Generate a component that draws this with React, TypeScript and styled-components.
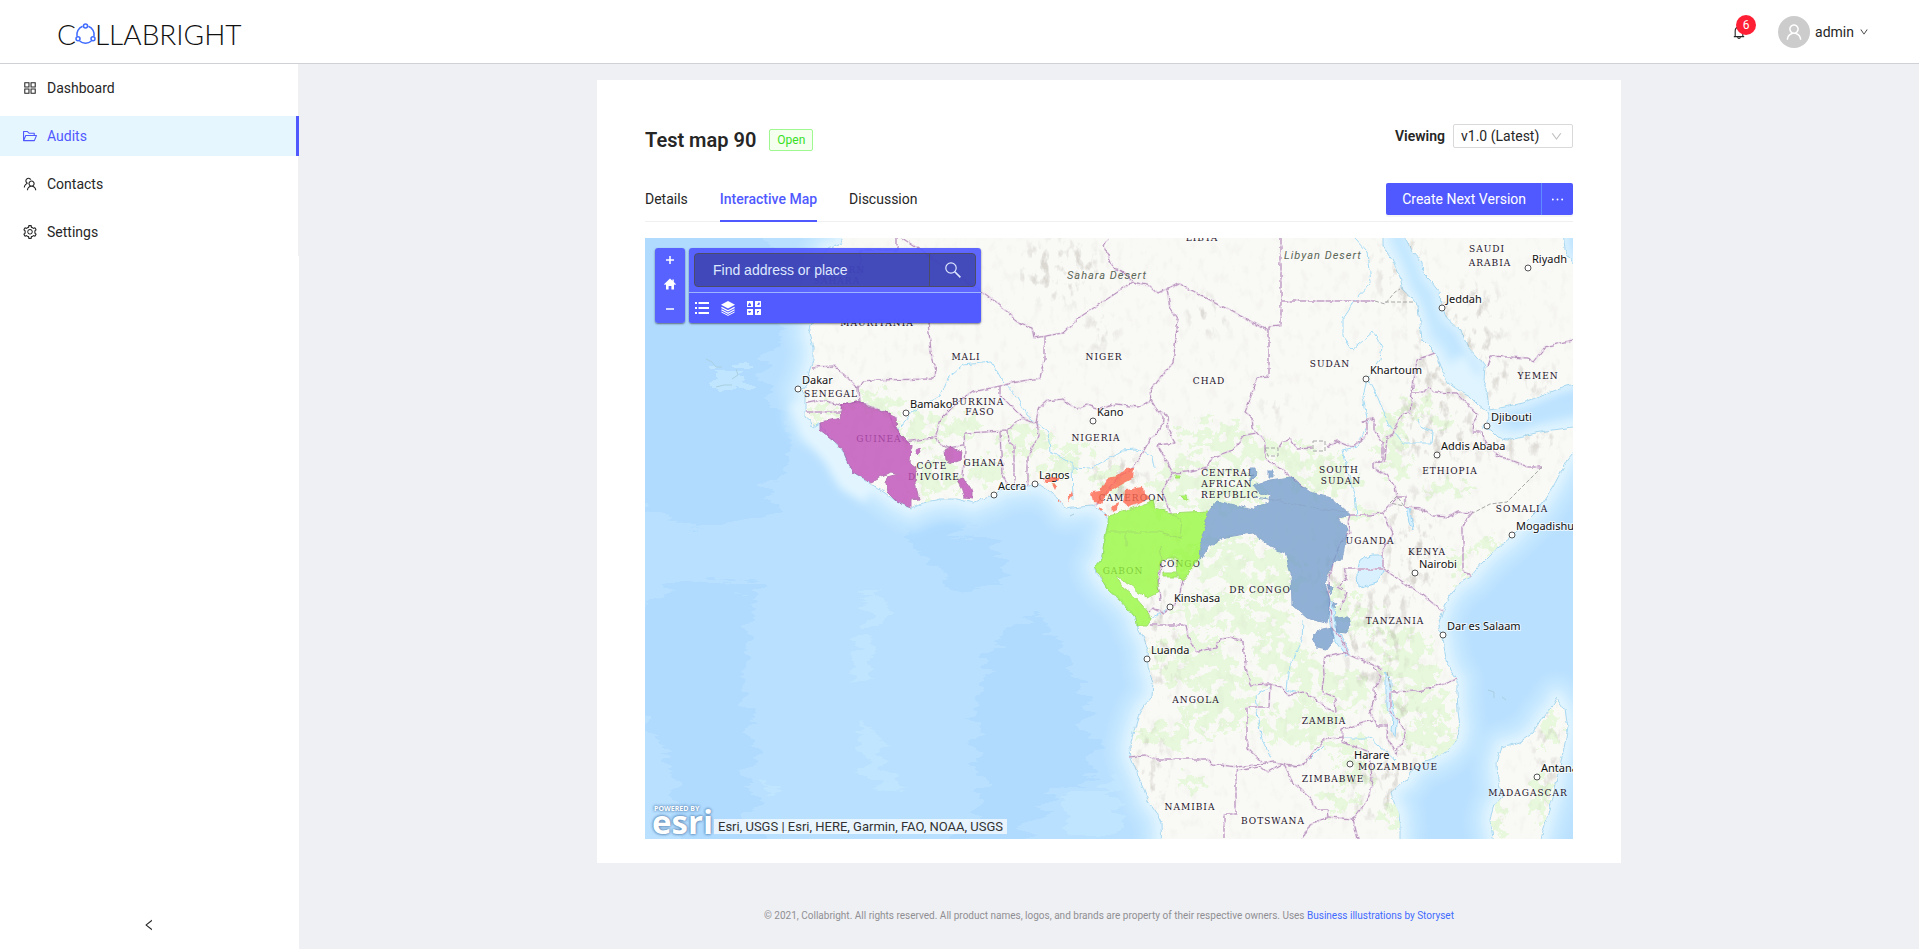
import React from 'react';
import styled, { createGlobalStyle, css } from 'styled-components';
import {
  AiOutlineAppstore,
  AiOutlineBell,
  AiOutlineDown,
  AiOutlineEllipsis,
  AiOutlineFolderOpen,
  AiOutlineLeft,
  AiOutlineSetting,
  AiOutlineTeam,
  AiOutlineUser,
} from 'react-icons/ai';

const color = {
  primary: '#5059ff',
  text: '#262626',
  page: '#eff0f4',
  line: '#f0f0f0',
};

const GlobalStyle = createGlobalStyle`
  *, *::before, *::after { box-sizing: border-box; }
  body {
    margin: 0;
    background: ${color.page};
    color: ${color.text};
    font: 14px/22px Roboto, "Liberation Sans", sans-serif;
  }
  button, input, select { font: inherit; color: inherit; margin: 0; }
  button { cursor: pointer; }
  a { text-decoration: none; }
`;

/* ---------- page frame ---------- */

const Page = styled.div`
  min-height: 100vh;
  display: flex;
  flex-direction: column;
`;

const Header = styled.header`
  height: 64px;
  flex: none;
  display: flex;
  align-items: center;
  justify-content: space-between;
  padding: 0 50px 0 57px;
  background: #fff;
  border-bottom: 1px solid #d0d1d4;
`;

const Logo = styled.a`
  display: flex;
  align-items: center;
  color: #111;
  font: 300 28px/28px Lato, sans-serif;
  padding-top: 4px;

  svg { display: block; margin: 0 -1px; }
`;

const HeaderActions = styled.div`
  display: flex;
  align-items: center;
  gap: 31px;
`;

const BellButton = styled.button`
  position: relative;
  display: flex;
  padding: 0;
  border: 0;
  background: none;
  font-size: 16px;
`;

const Badge = styled.span`
  position: absolute;
  left: 5px;
  top: -9px;
  width: 20px;
  height: 20px;
  border-radius: 10px;
  background: #ff1f35;
  color: #fff;
  font-size: 12px;
  line-height: 20px;
  text-align: center;
`;

const UserButton = styled.button`
  display: flex;
  align-items: center;
  gap: 5px;
  padding: 0;
  border: 0;
  background: none;

  > svg { font-size: 10px; }
`;

const Avatar = styled.span`
  display: grid;
  place-items: center;
  width: 32px;
  height: 32px;
  border-radius: 50%;
  background: #ccc;
  color: #fff;
  font-size: 20px;
`;

const Body = styled.div`
  flex: 1;
  display: flex;
`;

const Sidebar = styled.aside`
  flex: none;
  width: 299px;
  display: flex;
  flex-direction: column;
  justify-content: space-between;
  background: #fff;
`;

const Menu = styled.nav`
  display: flex;
  flex-direction: column;
  gap: 8px;
  padding: 4px 0;
  border-right: 1px solid ${color.line};
`;

const MenuItem = styled.a<{ $active?: boolean }>`
  display: flex;
  align-items: center;
  gap: 9px;
  height: 40px;
  padding-left: 22px;
  color: ${color.text};

  svg { font-size: 16px; }

  ${(p) =>
    p.$active &&
    css`
      margin-right: -1px;
      background: #e6f6ff;
      border-right: 3px solid ${color.primary};
      color: ${color.primary};
    `}
`;

const Collapse = styled.button`
  display: grid;
  place-items: center;
  height: 48px;
  padding: 0 2px 0 0;
  border: 0;
  background: #fff;
`;

const Main = styled.main`
  flex: 1;
  min-width: 0;
  display: flex;
  flex-direction: column;
  align-items: center;
  padding: 16px 24px 21px;
`;

/* ---------- card ---------- */

const Card = styled.section`
  width: 100%;
  max-width: 1024px;
  padding: 44px 48px 24px;
  background: #fff;
`;

const TitleRow = styled.div`
  display: flex;
  justify-content: space-between;
  align-items: flex-start;
  margin-bottom: 20px;
`;

const TitleGroup = styled.div`
  display: flex;
  align-items: center;
  gap: 13px;
`;

const Title = styled.h1`
  margin: 0;
  font-size: 20px;
  font-weight: 600;
  line-height: 32px;
`;

const Tag = styled.span`
  padding: 0 7px;
  border: 1px solid #a0f890;
  border-radius: 2px;
  background: #f4fff0;
  color: #36e01e;
  font-size: 12px;
  line-height: 20px;
`;

const VersionPicker = styled.label`
  display: flex;
  align-items: center;
  gap: 8px;
  font-weight: 600;
`;

const SelectBox = styled.span`
  position: relative;
  display: flex;
  font-weight: 400;

  select {
    appearance: none;
    width: 120px;
    height: 24px;
    padding: 0 7px;
    border: 1px solid #d9d9d9;
    border-radius: 2px;
    background: #fff;
  }

  svg {
    position: absolute;
    right: 10px;
    top: 6px;
    font-size: 13px;
    color: #bfbfbf;
    pointer-events: none;
  }
`;

const TabBar = styled.div`
  display: flex;
  justify-content: space-between;
  align-items: center;
  height: 46px;
  margin-bottom: 16px;
  box-shadow: inset 0 -1px ${color.line};
`;

const Tabs = styled.div`
  display: flex;
  gap: 32px;
`;

const Tab = styled.button<{ $active?: boolean }>`
  height: 46px;
  padding: 2px 0 0;
  border: 0;
  border-bottom: 2px solid ${(p) => (p.$active ? color.primary : 'transparent')};
  background: none;
  color: ${(p) => (p.$active ? color.primary : color.text)};
  font-weight: ${(p) => (p.$active ? 500 : 400)};
`;

const ButtonGroup = styled.div`
  display: flex;
`;

const PrimaryButton = styled.button<{ $side: 'left' | 'right' }>`
  display: flex;
  align-items: center;
  height: 32px;
  border: 0;
  background: ${color.primary};
  color: #fff;
  box-shadow: 0 2px 0 rgba(0, 0, 0, 0.04);
  ${(p) =>
    p.$side === 'left'
      ? css`
          padding: 0 15px 0 16px;
          border-right: 1px solid #5f8dff;
          border-radius: 2px 0 0 2px;
        `
      : css`
          padding: 0 7px;
          border-radius: 0 2px 2px 0;
          font-size: 17px;
        `}
`;

/* ---------- map ---------- */

const MapFrame = styled.div`
  position: relative;
  height: 601px;
  overflow: hidden;
  background: #b7dfff;

  > svg { display: block; width: 100%; height: 100%; }
`;

const MapControls = styled.div`
  position: absolute;
  left: 10px;
  top: 10px;
  display: flex;
  gap: 4px;
  color: #fff;
`;

const panel = css`
  background: rgba(80, 89, 255, 0.92);
  border-radius: 3px;
  box-shadow: 0 1px 2px rgba(0, 0, 0, 0.5);
`;

const ZoomPanel = styled.div`
  ${panel}
  display: flex;
  flex-direction: column;
  width: 30px;
  height: 75px;
  padding-bottom: 2px;
`;

const MapButton = styled.button`
  flex: 1;
  display: grid;
  place-items: center;
  padding: 0;
  border: 0;
  background: none;
`;

const SearchPanel = styled.div`
  ${panel}
  width: 292px;
`;

const SearchRow = styled.form`
  padding: 5px;
  height: 45px;
  border-bottom: 1px solid #9db4ff;
`;

const SearchField = styled.div`
  display: flex;
  height: 34px;
  border: 1px solid #4c4c66;
  border-radius: 4px;
  background: rgba(50, 55, 140, 0.6);

  input {
    flex: 1;
    min-width: 0;
    padding: 0 18px;
    border: 0;
    outline: 0;
    background: none;
    font: 14px/32px "Liberation Sans", sans-serif;
  }
  input::placeholder { color: #dfe8ff; opacity: 1; }
  button {
    width: 46px;
    display: grid;
    place-items: center;
    padding: 0;
    border: 0;
    border-left: 1px solid #4c4c66;
    background: none;
  }
`;

const ToolRow = styled.div`
  display: flex;
  align-items: center;
  gap: 10px;
  height: 30px;
  padding: 0 5px;
  border-radius: 0 0 3px 3px;
  background: rgba(80, 89, 255, 0.85);

  button { flex: none; width: 16px; height: 16px; }
`;

const Attribution = styled.div`
  position: absolute;
  left: 6px;
  bottom: 2px;
  display: flex;
  align-items: flex-end;
  gap: 3px;
`;

const EsriLogo = styled.a`
  width: 60px;
  display: flex;
  flex-direction: column;
  color: #fff;
  text-shadow: 0 0 3px #5a86b4, 0 0 3px #5a86b4;

  svg { display: block; overflow: visible; }
`;

const Credits = styled.span`
  margin-bottom: 3px;
  padding: 0 4px;
  background: rgba(255, 255, 255, 0.7);
  color: #323232;
  font-size: 13px;
  line-height: 15px;
`;

const Footer = styled.footer`
  margin-top: auto;
  color: #8f8f93;
  font-size: 10px;
  line-height: 24px;
  text-align: center;

  a { color: #3f6bff; }
`;

/* ---------- map artwork ---------- */

const AFRICA =
  'M843 238 840 245 827 249 820 262 822 280 815 300 812 323 809 333 813 347 813 360 810 368 808 377 806 385 802 390 806 395 806 417 810 420 813 427 820 422 822 428 827 433 833 440 842 450 847 460 853 472 868 482 885 493 897 502 911 509 923 503 940 499 957 499 973 503 982 499 993 496 1000 490 1013 487 1028 486 1040 485 1048 490 1057 497 1062 503 1066 509 1080 507 1092 506 1099 510 1105 514 1109 522 1107 533 1104 542 1103 552 1100 562 1095 566 1098 575 1107 587 1120 598 1132 612 1135 618 1137 627 1143 638 1147 650 1148 667 1153 682 1152 697 1143 707 1138 717 1133 733 1130 747 1131 758 1137 773 1143 787 1148 800 1157 813 1161 822 1162 860 1400 860 1400 827 1399 813 1393 800 1391 792 1397 787 1407 780 1413 770 1423 762 1437 757 1448 750 1457 740 1460 728 1458 710 1457 693 1457 680 1450 670 1446 657 1444 647 1443 637 1438 627 1442 613 1445 603 1452 592 1460 583 1470 577 1482 563 1493 552 1510 538 1523 525 1538 510 1553 487 1567 460 1600 420 1573 427 1560 429 1540 432 1523 436 1507 440 1497 437 1490 430 1482 428 1488 417 1487 412 1478 405 1470 397 1458 390 1448 383 1443 372 1437 355 1422 340 1420 323 1418 307 1412 298 1403 290 1400 277 1392 260 1383 245 1383 220 843 220Z';
const ARABIA =
  'M1405 220 1405 238 1413 252 1422 262 1423 273 1432 282 1440 292 1441 305 1447 318 1460 330 1467 345 1478 357 1485 367 1484 380 1487 393 1489 410 1500 408 1523 403 1540 396 1560 388 1590 380 1590 270 1573 263 1565 250 1562 220Z';
const MADAGASCAR =
  'M1557 698 1565 710 1568 727 1565 743 1562 757 1558 773 1553 797 1547 817 1538 850 1495 850 1490 820 1493 807 1502 797 1498 780 1497 763 1502 747 1520 742 1533 733 1543 717 1552 707Z';

const BORDERS = [
  'M897 238V250H860V275 M902 238 917 248 981 292 1009 312 1012 317 1020 323 1032 327 1034 338 1063 333 1080 317 1133 282 1122 271 1113 268 1108 255 1103 247 1108 238',
  'M1133 282 1150 286 1158 293 1178 283 1269 331V326L1281 325V238 M1281 301H1375',
  'M1269 331V377L1257 378 1253 390 1250 400 1245 412 1252 417 1253 428 1257 433 1265 443 1265 458 1273 463 1290 477 1305 488',
  'M1278 448 1282 442 1290 439 1297 449 1313 448 M1326 447 1337 441 1352 447 1367 435 1367 423 1363 422 1374 418 1374 430 1383 443 1383 460',
  'M1435 353 1417 360 1415 373 1412 393 1410 412 1403 413 1395 427 1393 434 1387 437 1385 460 1373 463 1373 468 1387 475 1395 487 1397 497 1405 497 1405 507 1422 508 1433 516 1448 517 1458 512 1473 513 1463 525 1463 568 1470 577',
  'M1412 393 1423 393 1428 387 1433 392 1457 393 1478 415 1473 423 1472 432 1482 432 1485 443 1497 455 1528 467 1542 467',
  'M1350 515 1370 515 1383 513 1390 505 1397 498 M1383 512 1393 533 1383 550 1383 569H1343L1347 580 1337 587 1346 592 1340 610 M1383 569 1423 595 1442 611',
  'M1350 515 1348 523 1350 533 1340 543 1333 563 1330 577 1328 590 1330 607 1332 627 1340 638 1350 655 1373 665 1383 670',
  'M1373 667 1380 677 1374 690 1375 700 1370 713 1377 725 1388 725 1387 737 1397 755 1398 747 1405 740 1403 727 1390 710 1390 692 1417 691 1433 688 1457 679',
  'M1372 720 1342 730V742L1370 752 1372 780 1370 797 1353 819 1358 839 M1342 737 1323 740 1303 765 1290 766 1283 763 1293 783 1310 797 1317 810 1327 810 1328 817 1353 819 M1328 817 1310 825 1303 839',
  'M1150 625H1186L1188 637 1197 651 1217 648 1219 638 1230 637 1243 641 1245 663 1250 685 1270 684 1283 688 1290 695 1303 692 1320 702 1328 710 1336 712 1335 698 1322 693 1324 675 1323 658 1347 652',
  'M1270 684 1269 707H1247V748L1262 762 M1130 757 1145 755 1157 759H1207L1212 764 1237 767 1275 762 1297 766 M1260 767 1236 771V814H1224V839 M1260 766 1267 772 1283 763',
  'M1183 580 1180 593 1172 607 1163 613 1153 608 1148 613 M1162 560 1158 583 1160 600',
  'M1151 400 1157 410 1163 417 1162 428 1150 440 1143 452 1133 468 1120 476 1108 490 1095 506 M1167 289 1170 308 1178 320 1173 363 1157 382 1150 393 1151 400',
  'M1157 410 1167 415 1168 430 1175 443 1157 445 1173 473 1162 490 1170 513 M1173 473 1187 472 1207 467 1213 457 1233 450 1245 435 1257 433',
  'M1037 423 1040 407 1047 401 1063 399 1077 409 1087 405 1100 409 1117 404 1137 407 1151 400 M1037 423 1039 435 1028 457V485 M1007 431 1008 440 1014 445V487',
  'M964 433 1007 431 1022 417 M964 433 965 450 963 477 M1000 432 1002 473 1008 485 M1044 337V360L1040 378 1012 383 1000 386 973 392 957 403 940 420 935 438',
  'M1000 386V395L1008 403 1022 417 1037 423 M928 323 932 360 936 370 934 379 873 380 862 381 858 388 835 366 812 367 M858 388 859 403 M807 403 822 400 840 405 M807 412 840 412 842 405',
  'M897 430 905 442 933 438 947 448 963 446 M842 405 858 402 888 413 897 430 M1487 367 1490 356 1527 358 1533 362 1545 347 1573 340',
];

const DISPUTED = [
  'M1375 301 1385 304 1395 292 1400 289 M1385 302H1415',
  'M1542 467 1507 502 1490 504 1473 513',
  'M1313 441h12v10h-12z M1265 448h13v8h-10z M1390 503 1397 496 1404 506z M1387 672 1391 690',
];

const RIVERS = [
  'M1355 238 1368 252 1371 283 1355 300 1343 318 1343 337 1352 349 1373 332 1382 347 1380 360 1367 378 1363 397 1368 423 1357 447 1342 450 1347 470 1355 493 1357 517',
  'M1367 378 1378 397 1388 423 1403 443 1432 443 1433 432 1422 428 1419 420',
  'M940 395 948 377 963 365 992 362 1003 382 1017 397 1027 415 1048 432 1050 452 1072 463 1073 500 M1073 468 1090 469 1123 450 1135 449 1153 457 1155 468',
  'M898 430 912 412 942 395 M1303 620 1302 640 1290 665 1287 690 1297 693 M1270 687 1255 695 1258 720 1262 740 1272 759 M1303 765 1323 745 M1342 738H1370L1395 760 M1150 620 1170 607',
];

/* [x, y, rx, ry] of the wooded areas */
const WOODS: number[][] = [
  [880, 402, 26, 12], [920, 430, 26, 14], [960, 425, 20, 12], [1025, 440, 24, 16], [935, 475, 24, 20],
  [825, 412, 20, 7], [988, 470, 20, 14], [1060, 468, 22, 12], [1075, 448, 26, 6], [1110, 480, 22, 12],
  [1215, 435, 40, 12], [1245, 450, 34, 14], [1190, 480, 34, 24], [1290, 455, 24, 14], [1225, 490, 40, 20],
  [1320, 475, 36, 20], [1165, 500, 20, 10], [1225, 560, 50, 20], [1265, 575, 40, 26], [1210, 610, 34, 20],
  [1255, 620, 40, 16], [1190, 660, 40, 26], [1230, 690, 32, 22], [1170, 735, 36, 12], [1215, 715, 34, 16],
  [1280, 655, 26, 22], [1310, 680, 22, 24], [1300, 725, 40, 20], [1345, 745, 24, 10], [1350, 690, 24, 20],
  [1420, 705, 36, 18], [1430, 740, 28, 16], [1410, 672, 30, 16], [1360, 620, 20, 14], [1400, 645, 34, 14],
  [1355, 770, 18, 12], [1395, 815, 18, 10], [1485, 548, 16, 8], [1460, 581, 12, 5], [1415, 405, 18, 8],
  [1400, 470, 12, 14], [1392, 450, 12, 20], [1450, 490, 26, 7], [1395, 428, 14, 14], [1440, 420, 12, 8],
  [1550, 730, 10, 16], [1540, 800, 8, 30], [1500, 815, 8, 20], [1340, 800, 20, 12], [1360, 515, 18, 6],
  [1190, 782, 14, 7], [1460, 560, 10, 8], [1340, 600, 14, 20],
];

/* [x, y, rx, ry] of the mountain ranges that get shaded relief */
const RELIEF: number[][] = [
  [1435, 425, 36, 50], [1410, 550, 26, 60], [1440, 350, 26, 60], [1480, 330, 20, 50], [1208, 315, 18, 16],
  [1510, 380, 50, 14], [1375, 640, 30, 50], [1330, 570, 14, 40], [1400, 730, 20, 40], [1160, 640, 14, 60],
  [1120, 480, 26, 26], [1180, 540, 10, 10], [1548, 740, 10, 70], [1060, 270, 40, 30], [1400, 260, 20, 50],
  [1380, 790, 30, 30], [1150, 770, 14, 40], [1500, 440, 60, 16], [1100, 330, 12, 20], [1275, 405, 8, 12],
];

const COUNTRIES: [string, number, number][] = [
  ['ANGOLA', 1196, 703], ['NAMIBIA', 1190, 810], ['BOTSWANA', 1273, 824], ['ZAMBIA', 1324, 724],
  ['ZIMBABWE', 1333, 782], ['MOZAMBIQUE', 1398, 770], ['MADAGASCAR', 1528, 796], ['TANZANIA', 1395, 624],
  ['KENYA', 1427, 555], ['UGANDA', 1370, 544], ['SOMALIA', 1522, 512], ['DR CONGO', 1260, 593],
  ['CONGO', 1180, 567], ['GABON', 1123, 574], ['CAMEROON', 1132, 501], ['NIGERIA', 1096, 441],
  ['NIGER', 1104, 360], ['CHAD', 1209, 384], ['CENTRAL', 1228, 476], ['AFRICAN', 1227, 487],
  ['REPUBLIC', 1230, 498], ['MALI', 966, 360], ['BURKINA', 978, 405], ['FASO', 980, 415],
  ['GHANA', 984, 466], ['CÔTE', 932, 469], ["D'IVOIRE", 934, 480], ['GUINEA', 879, 442],
  ['SENEGAL', 831, 397], ['MAURITANIA', 877, 326], ['WESTERN', 837, 273], ['SAHARA', 837, 284],
  ['LIBYA', 1202, 241], ['SUDAN', 1330, 367], ['SOUTH', 1339, 473], ['SUDAN', 1341, 484],
  ['ETHIOPIA', 1450, 474], ['YEMEN', 1538, 379], ['SAUDI', 1487, 252], ['ARABIA', 1490, 266],
];

const CITIES: [string, number, number][] = [
  ['Dakar', 798, 389], ['Bamako', 906, 413], ['Kano', 1093, 421], ['Lagos', 1035, 484],
  ['Accra', 994, 495], ['Khartoum', 1366, 379], ['Jeddah', 1442, 308], ['Riyadh', 1528, 268],
  ['Djibouti', 1487, 426], ['Addis Ababa', 1437, 455], ['Mogadishu', 1512, 535], ['Nairobi', 1415, 573],
  ['Dar es Salaam', 1443, 635], ['Harare', 1350, 764], ['Antananarivo', 1537, 777],
  ['Kinshasa', 1170, 607], ['Luanda', 1147, 659],
];

const Country = styled.text`
  font: 10px "DejaVu Serif Condensed", "DejaVu Serif", serif;
  letter-spacing: 1px;
  text-anchor: middle;
  fill: #23122a;
  stroke: rgba(255, 255, 255, 0.3);
  stroke-width: 1px;
  paint-order: stroke;
`;

const City = styled.text`
  font: 11px "Noto Sans", sans-serif;
  fill: #111;
  stroke: rgba(255, 255, 255, 0.7);
  stroke-width: 2px;
  paint-order: stroke;
`;

const Desert = styled.text`
  font: italic 11px Roboto, sans-serif;
  letter-spacing: 1px;
  fill: #5c6657;
`;

const MapArt = () => (
  <svg viewBox="645 238 928 601" preserveAspectRatio="xMidYMid slice" role="img" aria-label="Map of Africa">
    <defs>
      <filter id="rough" x="-5%" y="-5%" width="110%" height="110%">
        <feTurbulence type="fractalNoise" baseFrequency="0.12" numOctaves="3" seed="4" />
        <feDisplacementMap in="SourceGraphic" scale="5" xChannelSelector="R" yChannelSelector="G" />
      </filter>
      <filter id="shelf" x="-5%" y="-5%" width="110%" height="110%">
        <feGaussianBlur in="SourceGraphic" stdDeviation="4" />
      </filter>
      <filter id="bathymetry" x="-5%" y="-5%" width="110%" height="110%">
        <feTurbulence type="fractalNoise" baseFrequency="0.015 0.09" numOctaves="4" seed="9" />
        <feDisplacementMap in="SourceGraphic" scale="46" xChannelSelector="R" yChannelSelector="G" />
      </filter>
      <filter id="foliage" x="-5%" y="-5%" width="110%" height="110%">
        <feTurbulence type="fractalNoise" baseFrequency="0.09" numOctaves="5" seed="12" result="n" />
        <feDisplacementMap in="SourceGraphic" in2="n" scale="36" xChannelSelector="R" yChannelSelector="G" result="d" />
        <feColorMatrix in="n" type="matrix" values="0 0 0 0 0  0 0 0 0 0  0 0 0 0 0  0 0 30 0 -12" result="m" />
        <feComposite in="d" in2="m" operator="in" />
      </filter>
      <filter id="hills" x="0" y="0" width="100%" height="100%">
        <feTurbulence type="fractalNoise" baseFrequency="0.12 0.07" numOctaves="4" seed="21" result="n" />
        <feColorMatrix in="n" type="matrix" values="0 0 0 0 .45  0 0 0 0 .42  0 0 0 0 .36  0 4 0 0 -2.1" result="s" />
        <feGaussianBlur in="SourceAlpha" stdDeviation="8" result="b" />
        <feComposite in="s" in2="b" operator="in" />
      </filter>
      <clipPath id="land">
        <path d={AFRICA} />
        <path d={ARABIA} />
        <path d={MADAGASCAR} />
      </clipPath>
    </defs>

    <rect x="645" y="238" width="928" height="601" fill="#b9e0ff" />
    <g filter="url(#bathymetry)" fill="#b0dbff">
      <path d="M620 210H740L790 300 760 370 790 440 770 510 700 530 620 500Z" />
      <path d="M665 590 760 580 750 660 745 730 760 860 690 860 670 760 630 700 630 620Z" />
      <path d="M920 510 990 535 1010 580 960 585 900 540Z" />
      <path d="M1030 605 1060 640 1085 700 1095 770 1060 790 1000 860 960 860 980 780 975 690 1000 640Z" />
    </g>
    <g filter="url(#bathymetry)" fill="#c0e6ff">
      <path d="M715 365h30v25h-30z M850 640l20-4 6 50-24-4z M862 600l22-6 4 34-20 0z M855 720l24 10 14 60-24-6z M1060 800l60-30v70h-50z M760 780l20 10-12 10z" />
    </g>

    <g fill="none" strokeLinejoin="round" filter="url(#shelf)">
      <g stroke="#c4e7ff" strokeWidth="44"><path d={AFRICA} /><path d={MADAGASCAR} /></g>
      <g stroke="#d3eeff" strokeWidth="22"><path d={AFRICA} /><path d={MADAGASCAR} /><path d={ARABIA} strokeWidth="12" /></g>
      <g stroke="#e4f6ff" strokeWidth="8"><path d={AFRICA} /><path d={MADAGASCAR} /><path d={ARABIA} strokeWidth="4" /></g>
      <path d="M800 400 812 430 835 455 850 480 870 492" stroke="#e2f5ff" strokeWidth="24" />
      <path d="M1394 228 1410 262 1420 290 1434 320 1450 345 1460 365" stroke="#c3e7ff" strokeWidth="12" />
      <path d="M1455 360 1470 385 1482 405" stroke="#dff4ff" strokeWidth="24" />
      <path d="M1580 405 1540 414 1510 424" stroke="#bde3ff" strokeWidth="18" />
    </g>

    <g filter="url(#rough)" fill="#f9f9f6" stroke="#a9d8f0" strokeWidth="1">
      <path d={AFRICA} />
      <path d={ARABIA} />
      <path d={MADAGASCAR} />
    </g>

    <g clipPath="url(#land)">
      <g filter="url(#foliage)" fill="#e7f8dc">
        {WOODS.map(([x, y, rx, ry], i) => <ellipse key={i} cx={x} cy={y} rx={rx} ry={ry} />)}
      </g>
      <g opacity="0.06"><rect x="645" y="238" width="928" height="601" filter="url(#hills)" /></g>
      <g filter="url(#hills)" opacity="0.4">
        {RELIEF.map(([x, y, rx, ry], i) => <ellipse key={i} cx={x} cy={y} rx={rx} ry={ry} />)}
      </g>
    </g>

    <g fill="#d9f1ff" stroke="#9fd6f2" strokeWidth="1" filter="url(#rough)">
      <path d="M1360 560 1372 555 1382 555 1383 572 1377 582 1358 588 1357 573Z" />
      <path d="M1406 508 1409 509 1412 522 1413 530 1410 526Z" />
      <path d="M1328 600 1332 602 1335 625 1343 640 1351 655 1346 655 1332 635 1329 618Z" />
      <path d="M1386 672 1391 680 1391 700 1397 722 1396 738 1392 730 1393 718 1386 708Z" />
    </g>
    <g fill="none" stroke="#a5dcf5" strokeWidth="1" filter="url(#rough)">
      {RIVERS.map((d) => <path key={d} d={d} />)}
    </g>
    <g fill="none" strokeLinejoin="round" filter="url(#rough)">
      {BORDERS.map((d) => <path key={d} d={d} stroke="#e6d6e7" strokeWidth="2" />)}
      {BORDERS.map((d) => <path key={d} d={d} stroke="#b793bb" strokeWidth="1" strokeDasharray="7 2" />)}
    </g>
    <g fill="none" stroke="#a8a8a8" strokeWidth="1" strokeDasharray="4 2">
      {DISPUTED.map((d) => <path key={d} d={d} />)}
    </g>
    <g fill="none" stroke="#a9cfe0" strokeWidth="1">
      <path d="M706 359l6 3 4 5 6 0 M736 369l2 6 -6 4 M716 387l8-2 8 0 M1070 516l4-2 M1488 690l6 2 0 6 M1502 697l4 3" />
    </g>

    <Desert x="1067" y="279">Sahara Desert</Desert>
    <Desert x="1284" y="259">Libyan Desert</Desert>
    {COUNTRIES.map(([name, x, y]) => <Country key={name + y} x={x} y={y}>{name}</Country>)}
    {CITIES.map(([name, x, y]) => (
      <g key={name}>
        <circle cx={x} cy={y} r="3" fill="#fff" stroke="#555" strokeWidth="1" />
        <City x={x + 4} y={y - 5}>{name}</City>
      </g>
    ))}

    <g opacity="0.8" filter="url(#rough)">
      <g fill="#bf4fb9" stroke="#a556a5" strokeWidth="1">
        <path d="M842 405 858 402 868 407 888 413 897 417 898 432 911 445 910 463 916 467 915 483 919 499 911 500 911 508 897 502 887 492 885 483 887 477 898 474 890 472 870 482 853 472 847 460 842 448 832 439 820 430 820 422 840 418Z" />
        <path d="M945 450 952 447 961 452 960 460 952 463 946 460Z M957 480 963 478 972 492 972 499 965 498 962 488Z M916 450 920 448 921 452 918 454Z" />
      </g>
      <g fill="#ff6750">
        <path d="M1091 492 1100 491 1107 478 1117 476 1125 469 1134 468 1133 478 1120 485 1108 493 1102 503 1093 502Z" />
        <path d="M1125 490 1143 487 1144 495 1151 498 1140 502 1128 507 1123 503Z M1112 506 1118 503 1117 509 1113 511Z M1098 507 1103 509 1101 512Z M1044 479 1050 477 1060 479 1058 482 1046 482Z M1053 484 1058 485 1056 490Z M1072 491 1073 495 1068 502 1069 498Z M1104 514 1108 516 1105 517Z M1058 499 1060 502 1058 503Z" />
      </g>
      <g fill="#98f940" stroke="#8ed94a" strokeWidth="1">
        <path d="M1109 515 1130 509 1147 503 1153 500 1155 508 1170 513 1208 511 1207 523 1202 535 1200 557 1187 575 1183 580 1178 579 1177 558 1168 558 1160 563 1157 577 1159 592 1147 598 1130 585 1117 577 1122 587 1135 597 1148 612 1151 620 1147 626 1136 626 1135 617 1120 600 1107 588 1095 566 1102 558 1104 542 1108 523Z" />
        <path d="M1163 572h14v5h-14z M1175 475h5v3h-5z M1179 495l8 0 1 4-5 0z" />
        <path d="M1108 532H1126V546 M1126 532H1160L1180 538 1182 520 1170 513 M1160 545 1162 560" fill="none" />
      </g>
      <g fill="#779fcd" stroke="#7295c4" strokeWidth="1">
        <path d="M1208 512 1217 501 1230 504 1253 510 1257 505 1270 502 1271 496 1260 493 1253 485 1270 480 1290 477 1310 492 1330 497 1350 515 1337 517 1348 530 1345 543 1342 560 1333 563 1325 583 1330 600 1327 623 1307 618 1292 605 1291 573 1285 553 1270 547 1253 533 1227 537 1210 545 1200 560 1202 535 1207 523Z" />
        <path d="M1312 640 1318 630 1332 627 1334 640 1326 650 1316 648Z M1335 618 1348 617 1350 625 1346 633 1337 632Z M1268 471h5v6h-5z M1250 468 1255 468 1256 476 1250 482Z M1327 584 1332 588 1331 594Z M1333 601 1337 603 1334 608Z" />
        <path d="M1255 497 1275 500 1300 505 1325 510 1350 512" fill="none" />
      </g>
    </g>
  </svg>
);

/* ---------- app ---------- */

const MENU = [
  { label: 'Dashboard', Icon: AiOutlineAppstore },
  { label: 'Audits', Icon: AiOutlineFolderOpen, active: true },
  { label: 'Contacts', Icon: AiOutlineTeam },
  { label: 'Settings', Icon: AiOutlineSetting },
];

const TABS = ['Details', 'Interactive Map', 'Discussion'];

export default function App() {
  return (
    <Page>
      <GlobalStyle />
      <Header>
        <Logo href="#" aria-label="Collabright">
          <span>C</span>
          <svg width="21" height="22" viewBox="0 0 21 22" fill="none" stroke="#3f6bff" strokeWidth="1.5">
            <path d="M7.6 3.2A9 9 0 0 0 2 13.4M13.4 3.2A9 9 0 0 1 19 13.4M4.6 18A9 9 0 0 0 16.4 18" />
            <circle cx="10.5" cy="2.9" r="2" />
            <circle cx="3" cy="15.7" r="2" />
            <circle cx="18" cy="15.7" r="2" />
          </svg>
          <span>LLABRIGHT</span>
        </Logo>
        <HeaderActions>
          <BellButton aria-label="Notifications">
            <AiOutlineBell />
            <Badge>6</Badge>
          </BellButton>
          <UserButton>
            <Avatar><AiOutlineUser /></Avatar>
            admin
            <AiOutlineDown />
          </UserButton>
        </HeaderActions>
      </Header>
      <Body>
        <Sidebar>
          <Menu>
            {MENU.map(({ label, Icon, active }) => (
              <MenuItem key={label} href="#" $active={active}>
                <Icon />
                {label}
              </MenuItem>
            ))}
          </Menu>
          <Collapse aria-label="Collapse menu"><AiOutlineLeft /></Collapse>
        </Sidebar>
        <Main>
          <Card>
            <TitleRow>
              <TitleGroup>
                <Title>Test map 90</Title>
                <Tag>Open</Tag>
              </TitleGroup>
              <VersionPicker>
                Viewing
                <SelectBox>
                  <select defaultValue="1.0">
                    <option value="1.0">v1.0 (Latest)</option>
                  </select>
                  <AiOutlineDown />
                </SelectBox>
              </VersionPicker>
            </TitleRow>
            <TabBar>
              <Tabs role="tablist">
                {TABS.map((name, i) => (
                  <Tab key={name} role="tab" aria-selected={i === 1} $active={i === 1}>{name}</Tab>
                ))}
              </Tabs>
              <ButtonGroup>
                <PrimaryButton $side="left">Create Next Version</PrimaryButton>
                <PrimaryButton $side="right" aria-label="More actions"><AiOutlineEllipsis /></PrimaryButton>
              </ButtonGroup>
            </TabBar>
            <MapFrame>
              <MapArt />
              <MapControls>
                <ZoomPanel>
                  <MapButton aria-label="Zoom in">
                    <svg width="8" height="8" viewBox="0 0 8 8" stroke="#fff" strokeWidth="1.5"><path d="M4 0V8M0 4H8" /></svg>
                  </MapButton>
                  <MapButton aria-label="Default extent">
                    <svg width="12" height="12" viewBox="0 0 12 12" fill="#fff"><path d="M6 .5 0 6.3 1 7 2 6.3V11.5H4.6V8H7.4V11.5H10V6.3L11 7 12 6.3 9.8 4.1V1.5H8.4V2.8Z" /></svg>
                  </MapButton>
                  <MapButton aria-label="Zoom out">
                    <svg width="8" height="8" viewBox="0 0 8 8" stroke="#fff" strokeWidth="1.5"><path d="M0 4H8" /></svg>
                  </MapButton>
                </ZoomPanel>
                <SearchPanel>
                  <SearchRow>
                    <SearchField>
                      <input type="text" placeholder="Find address or place" aria-label="Find address or place" />
                      <button type="button" aria-label="Search">
                        <svg width="16" height="16" viewBox="0 0 16 16" fill="none" stroke="#dfe8ff" strokeWidth="1.2">
                          <circle cx="6" cy="6" r="5.2" />
                          <path d="M9.8 9.8 15.4 15.4" strokeWidth="1.6" />
                        </svg>
                      </button>
                    </SearchField>
                  </SearchRow>
                  <ToolRow>
                    <MapButton aria-label="Legend">
                      <svg width="16" height="16" viewBox="0 0 16 16" fill="#fff">
                        <path d="M1 2h2v2H1zM1 7h2v2H1zM1 12h2v2H1zM4.500 2H15v2H4.500zM4.500 7H15v2H4.500zM4.500 12H15v2H4.500z" />
                      </svg>
                    </MapButton>
                    <MapButton aria-label="Layers">
                      <svg width="16" height="16" viewBox="0 0 16 16" fill="#fff">
                        <path d="M8 1 15 4.800 8 8.500 1 4.800Z" />
                        <path d="M1.400 7.400 8 10.900 14.600 7.400M1.400 9.800 8 13.300 14.600 9.800" fill="none" stroke="#fff" strokeWidth="1.2" />
                        <path d="M1.400 12 8 15.400 14.600 12" fill="none" stroke="#fff" strokeWidth="1" />
                      </svg>
                    </MapButton>
                    <MapButton aria-label="Basemaps">
                      <svg width="16" height="16" viewBox="0 0 16 16" fill="#fff">
                        <path d="M1 1h6v6H1zM9 1h6v6H9zM1 9h6v6H1zM9 9h6v6H9z" />
                        <path d="M2 5l1.500-2.500L5 4.500V6H2zM11 5l2-3 1 2-1 1zM2 11h3v1l-2 1zM11 11l2 0v1h-1l-1 2z" fill="#5059ff" />
                      </svg>
                    </MapButton>
                  </ToolRow>
                </SearchPanel>
              </MapControls>
              <Attribution>
                <EsriLogo href="#">
                  <svg width="60" height="34" viewBox="0 0 60 34" fill="#fff">
                    <text x="3" y="8" fontFamily="Open Sans" fontWeight="700" fontSize="7">POWERED BY</text>
                    <text x="1" y="31" fontFamily="Open Sans" fontWeight="700" fontSize="33">esri</text>
                  </svg>
                </EsriLogo>
                <Credits>Esri, USGS | Esri, HERE, Garmin, FAO, NOAA, USGS</Credits>
              </Attribution>
            </MapFrame>
          </Card>
          <Footer>
            © 2021, Collabright. All rights reserved. All product names, logos, and brands are property of their
            respective owners. Uses <a href="#">Business illustrations by Storyset</a>
          </Footer>
        </Main>
      </Body>
    </Page>
  );
}
